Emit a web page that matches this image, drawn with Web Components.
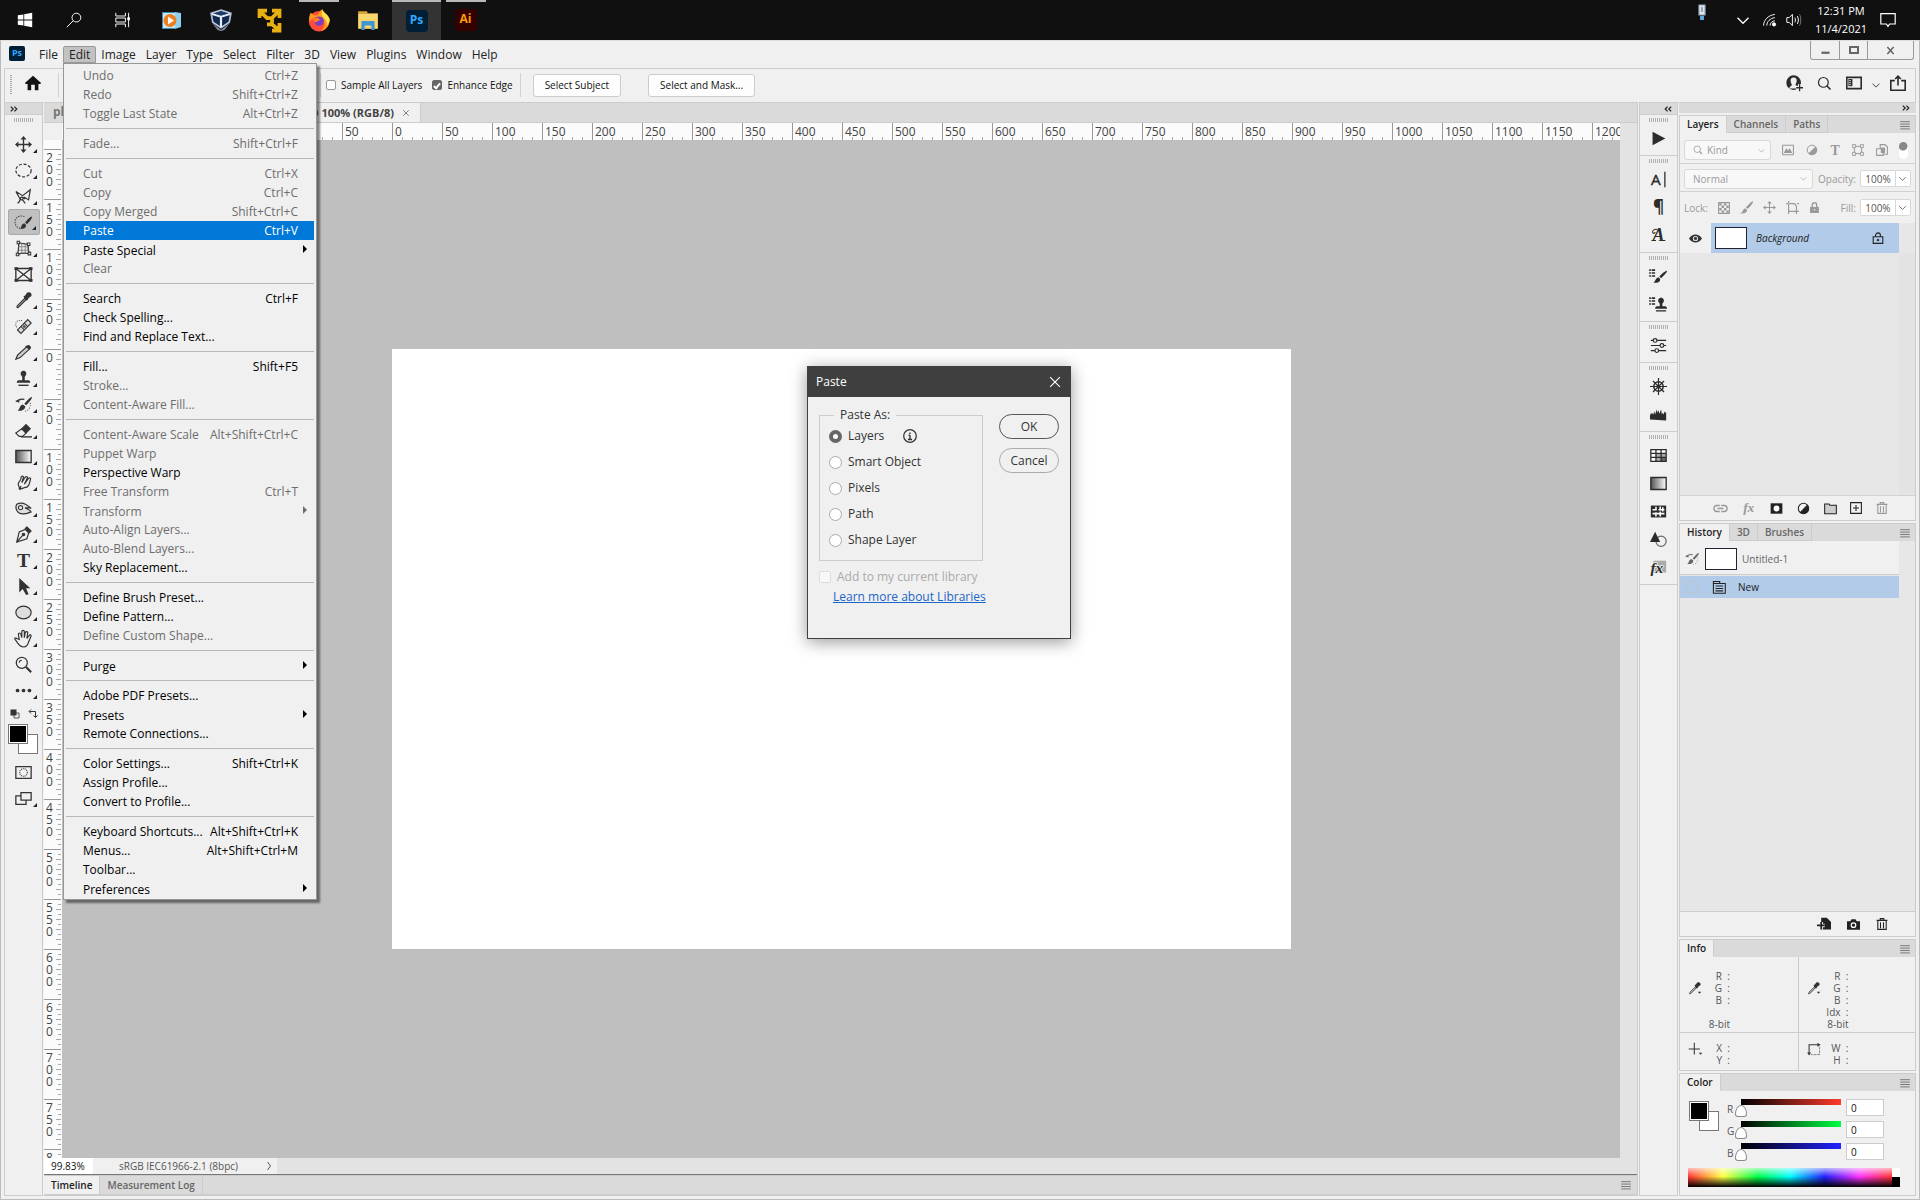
<!DOCTYPE html>
<html lang="en">
<head>
<meta charset="utf-8">
<title>Photoshop</title>
<style>
  html, body { height: 100%; }
  body {
    margin: 0;
    display: flex;
    flex-direction: column;
    overflow: hidden;
    background: #f0f0f0;
    color: #333;
    font: 12px/16px "Open Sans", "Noto Sans", sans-serif;
  }
</style>
</head>
<body>
<task-bar></task-bar>
<app-window></app-window>

<script>
// inner markup of every icon, on a 20x20 grid
const ICONS = {
  windows: '<path fill="currentColor" stroke="none" d="M1 4l7-1v6.500H1zM9 2.800L19 1v8.500H9zM1 10.500h7V17l-7-1zM9 10.500h10V19L9 17.200z"/>',
  search: '<circle cx="13" cy="7" r="5.500"/><path d="M9 11L1 19"/>',
  lens: '<circle cx="8.500" cy="8.500" r="6.500" stroke-width="1.600"/><path stroke-width="2.200" d="M13 13l5 5"/>',
  taskview: '<path d="M1 1v4h12V1M1 19v-4h12v4M1 7.500h12v5H1zM17 1v18"/><path fill="currentColor" d="M16 7h2v3h-2z"/>',
  player: '<path fill="#3d8ab5" stroke="none" d="M0 2h13v17H0z"/><path fill="#8fd0ee" stroke="none" d="M13 2l6 1v14l-6 2z"/><path fill="#c6e7f5" stroke="none" d="M1 3h12v15H1z"/><circle cx="8" cy="10.500" r="6.500" fill="#ef7d1a" stroke="none"/><path fill="#fff" stroke="none" d="M6 6.500l6 4-6 4z"/>',
  vbox: '<path fill="#8592b0" stroke="none" d="M2 13l8 6 8-6-5 6-3 1-3-1z"/><path fill="#12294f" stroke="#b7c4dc" stroke-width="1.500" d="M10 1l9 3-1.500 8L10 17l-7.500-5L1 4z"/><path fill="#274778" stroke="#e6edf8" stroke-width="2" d="M2 4.500L10 7l8-2.500M10 7v9.500"/><path fill="#203c6b" stroke="none" d="M10 2l7 2-7 2-7-2z"/>',
  vmware: '<path stroke="#e8b010" stroke-width="3" d="M2 8V2h6M2 2l6 6h3M12 2h6v6M18 2l-6 6v5M12 18h6v-6M18 18l-6-5H8"/>',
  firefox: '<circle cx="10" cy="11" r="8.500" fill="#ff4b39" stroke="none"/><path fill="#ff9a1f" stroke="none" d="M3 4l3 2 3 0c0-2 2-4 4-5 0 3 5 4 6 9 0 4-3 8-7 9 4-4 3-9 0-11L6 8l-4 3c-.500-3 0-5 1-7z"/><path fill="#ffe14d" stroke="none" d="M13 1c0 3 5 4 6 9l-2 5c0-5-4-7-5-10z"/><circle cx="10" cy="11" r="4" fill="#7b3fc4" stroke="none"/><path fill="#ff7b25" stroke="none" d="M4 9l5-1 2 2-4 2z"/>',
  explorer: '<path fill="#e0a32e" stroke="none" d="M1 2h8l1 2H1z"/><path fill="#fbd56d" stroke="none" d="M1 4h18v14H1z"/><path fill="#3f96d2" stroke="none" d="M4 19v-8h12v8h-3v-4H7v4z"/>',
  usb: '<path fill="#dfe8f0" stroke="#9ab" d="M7 2h6v10H7z"/><path fill="#5ca7dc" stroke="none" d="M8 13h4v4H8z"/><path stroke="#678" d="M10 4v5"/>',
  down: '<path d="M5 8l5 5 5-5"/>',
  right: '<path stroke-width="2" d="M7 2l6 8-6 8"/>',
  wifi: '<path d="M2 17C2 10 8 4 16 3M6 17c0-5 4-9 10-10M10 17c0-3 3-6 6-6"/><circle cx="15" cy="15.500" r="2" fill="currentColor"/>',
  volume: '<path d="M1 7h3l4-4v14l-4-4H1zM11 7c1 2 1 4 0 6M14 5c2 3 2 7 0 10"/><path stroke="#777" d="M17 3c2 4 2 10 0 14"/>',
  notice: '<path stroke-width="1.500" d="M1 2h18v13h-7l-2 3-2-3H1z"/>',
  home: '<path fill="currentColor" stroke="none" d="M10 2l9 8-1 1h-2v7h-4v-6H8v6H4v-7H2l-1-1z"/>',
  user: '<circle cx="9" cy="9" r="8" fill="currentColor"/><path fill="#f0f0f0" stroke="none" d="M9 3c3 0 4 2 3.500 5L11 12c4 1 4 3 4 4H4c0-2 1-3 3-4L5.500 8C5 5 6 3 9 3z"/><path stroke="#f0f0f0" stroke-width="4" d="M16 11v8M12 15h7"/><path stroke-width="1.500" d="M16 11v8M12 15h8"/>',
  workspace: '<path stroke-width="2" d="M1 3h18v14H1z"/><path stroke="none" fill="currentColor" d="M3 5h5v9H3z"/><path stroke="#f0f0f0" d="M4 7h2M4 9.500h2M4 12h2"/>',
  share: '<path stroke-width="2" d="M6 7H1v12h18V7h-5M10 13V2M6.500 5L10 1.500 13.500 5"/>',
  move: '<path d="M10 2v16M2 10h16" stroke-width="1.600"/><path fill="currentColor" stroke="none" d="M10 0l3.500 4h-7zM10 20l3.500-4h-7zM0 10l4-3.500v7zM20 10l-4-3.500v7z"/>',
  marquee: '<ellipse cx="10" cy="10" rx="9" ry="7.500" stroke-width="1.400" stroke-dasharray="3.500 2"/>',
  lasso: '<path stroke-width="1.400" d="M1 4l8 5 9-7-2 12-5-3-3 3c-3 0-2-4 1-3l3 2M1 4l5 9c0 3-1 4-3 5M9 14l3 4"/>',
  quick: '<path stroke-dasharray="1.500 1.500" d="M11 3C7 1 0 3 0 9c0 5 3 8 8 8"/><path fill="currentColor" stroke="none" d="M20 3c1 1-3 7-6 9l-2-2c2-3 6-7 8-7zM11 11l2 2c0 4-3 5-7 4 2-1 1-5 5-6z"/>',
  warp: '<path stroke-width="1.500" d="M4 3c4 2 8 1 12 2M4 3c1 5 0 9-1 14M3 17c5-2 9-2 14-1M16 5c-1 4-1 7 1 11"/><path stroke="#888" d="M8 4v12M12 5v10M4 8h12M4 12h12"/><path fill="#f0f0f0" d="M2.500 1.500h3v3h-3zM14.500 3.500h3v3h-3zM1.500 15.500h3v3h-3zM15.500 14.500h3v3h-3z"/>',
  frame: '<path stroke-width="1.600" d="M1 3h18v14H1zM1 3l18 14M19 3L1 17"/><path fill="currentColor" d="M0 2h3v2H0zM17 2h3v2h-3zM0 16h3v2H0zM17 16h3v2h-3z"/>',
  dropper: '<path d="M12 7l-9 9c-1 1-1 3 1 2l9-9z" fill="#f0f0f0" stroke-width="1.500"/><path fill="currentColor" stroke="none" d="M10 5l2-1 2-3c3-2 7 1 5 4l-3 2-1 2-1 1-2-1z"/>',
  heal: '<path stroke-dasharray="1 1.500" d="M2 11C-1 6 2 2 8 3"/><path fill="#ddd" stroke-width="1.400" d="M15 2l4 4L7 18l-4-4z"/><path d="M11 6l4 4M7 10l4 4"/><circle cx="11" cy="10" r="1"/>',
  pencil: '<path fill="#ccc" stroke-width="1.400" d="M14 3l3 3L6 16l-5 2 2-5z"/><path fill="currentColor" d="M13 3l2-1c1-1 4 1 3 3l-1 1z"/>',
  stamp: '<path fill="currentColor" stroke="none" d="M10 1c3 0 4 3 3 5l-1.500 2v4H16c1 0 2 1 2 3H2c0-2 1-3 2-3h4.500V8L7 6c-1-2 0-5 3-5z"/><path stroke-width="1.600" d="M4 18h12"/>',
  histbrush: '<path stroke-width="1.500" d="M2 7c2-3 5-4 9-3"/><path fill="currentColor" stroke="none" d="M0 6l5-2v4zM20 1c0 3-4 7-7 10l-2-2c3-3 6-7 9-8zM9 10l3 2c0 4-4 6-9 5 3-1 2-6 6-7z"/><path stroke-dasharray="1 2" d="M18 8c1 5-2 9-6 10"/>',
  eraser: '<path fill="#f0f0f0" stroke-width="1.400" d="M8 8l5 5-4 4H5l-4-4z"/><path fill="currentColor" d="M13 3l5 5-5 5-5-5z"/><path stroke-width="1.600" d="M7 17.500h13"/>',
  gradient: '<defs><linearGradient id="g"><stop offset="0" stop-color="#555"/><stop offset="1" stop-color="#fff"/></linearGradient></defs><path fill="url(#g)" stroke-width="1.600" d="M1 3h18v14H1z"/>',
  smudge: '<path stroke-width="1.400" d="M5 18c1-3-2-4-1-7 1-4 4-3 3-7 1-2 3-2 3 0L8 10c2-2 2-5 5-7 2 0 2 1 1 3l-3 6 5-7c2-1 3 0 2 2-1 5-2 9-7 9l-5 2 1-4"/>',
  sponge: '<path fill="#e0e0e0" stroke-width="1.400" d="M2 5c5-3 10-2 17 5-3-2-4 0-7-1 3 2 6 3 7 5-6 3-14 4-17-2-1-2-1-5 0-7z"/><circle cx="6.500" cy="9" r="2.500"/>',
  pen: '<path stroke-width="1.400" d="M12 4l4 4-2 7-12 4 3-12zM2 19l7-8"/><circle cx="10" cy="10" r="1.500" fill="currentColor"/><path fill="currentColor" d="M14 1l5 5-2 2-5-5z"/>',
  type: '<text x="10" y="18" font-family="Liberation Serif" font-weight="bold" font-size="23" text-anchor="middle" fill="currentColor" stroke="none">T</text>',
  arrow: '<path fill="currentColor" stroke="none" d="M5 0v17l4-4 4 7 3-1-3-7h5z"/>',
  ellipse: '<ellipse cx="10" cy="10" rx="9" ry="7.500" fill="#ddd" stroke-width="1.400"/>',
  hand: '<path fill="#f0f0f0" stroke-width="1.400" d="M5 11L4 5c0-2 2-2 3 0l1 4V2c0-2 3-2 3 0v7l1-6c1-2 3-1 3 0l-1 7 3-4c1-1 2 0 2 1l-3 7c-1 4-3 6-6 6-5 0-6-4-10-9-1-2 1-2 2-1z"/>',
  zoom: '<circle cx="8" cy="8" r="6.500" stroke-width="1.500"/><path d="M5 8c0-2 1-3 3-3"/><path stroke-width="2.500" d="M13 13l6 6"/>',
  dots: '<g fill="currentColor" stroke="none"><circle cx="3" cy="10" r="2.200"/><circle cx="10" cy="10" r="2.200"/><circle cx="17" cy="10" r="2.200"/></g>',
  mask: '<path stroke-width="1.500" d="M1 3h18v14H1z"/><circle cx="10" cy="10" r="4.500" stroke-dasharray="1.200 1"/>',
  screens: '<path stroke-width="1.500" d="M7 3h12v9H7zM7 7H1v10h12v-5"/>',
  tiny: '<path stroke-width="1.600" d="M8 8h10v10H8z"/><path fill="currentColor" stroke="none" d="M1 1h12v12H1z"/>',
  swap: '<path stroke-width="2" d="M3 5h12v12M6 1L2 5l4 4M11 13l4 4 4-4"/>',
  play: '<path fill="currentColor" stroke="none" d="M3 2l15 8-15 8z"/>',
  char: '<text x="7" y="16" font-size="18" text-anchor="middle" fill="currentColor" stroke="currentColor" stroke-width=".5">A</text><path stroke-width="1.500" d="M17.500 1v18"/>',
  para: '<text x="10" y="16" font-size="20" font-weight="bold" text-anchor="middle" fill="currentColor" stroke="none">¶</text>',
  glyph: '<text x="10" y="17" font-family="Liberation Serif" font-style="italic" font-weight="bold" font-size="21" text-anchor="middle" fill="currentColor" stroke="none">A</text><path d="M9 3c-4-1-6 1-6 3s3 2 3 0M2 16h5M12 16h6"/>',
  brushes: '<path stroke-width="1.800" stroke-dasharray="2 1 4 9" d="M-1 2.500h7M-1 6h7M-1 9.500h7"/><path fill="currentColor" stroke="none" d="M20 3c0 3-4 6-7 9l-2-2c3-3 6-6 9-7zM10 11l2 2c0 4-3 5-8 4 3-1 2-5 6-6z"/>',
  clones: '<path stroke-width="1.800" stroke-dasharray="2 1 4 9" d="M-1 2.500h7M-1 6h7M-1 9.500h7"/><path fill="currentColor" stroke="none" d="M13 2c3 0 4 3 3 5l-1.500 2v3H18c1 0 2 1 2 3H6c0-2 1-3 2-3h3.500V9L10 7c-1-2 0-5 3-5z"/><path stroke-width="1.500" d="M7 17.500h12"/>',
  sliders: '<path stroke-width="1.400" d="M1 4h18M1 10h18M1 16h18"/><g fill="#f0f0f0" stroke-width="1.400"><circle cx="6" cy="4" r="2.200"/><circle cx="14" cy="10" r="2.200"/><circle cx="8" cy="16" r="2.200"/></g>',
  wheel: '<circle cx="10" cy="10" r="5.500" stroke-width="1.800"/><path stroke-width="1.400" d="M10 0v20M0 10h20M3.500 3.500l13 13M16.500 3.500l-13 13"/>',
  histogram: '<path fill="currentColor" stroke="none" d="M0 16V8l1 3 1-3 2 2 1-4 1 4 2-6 1 4 1-3 1 4 2-5 1 6 1-2 1 2 1-4v1l1 1 1-1v10z"/>',
  swatches: '<path fill="#fff" stroke="none" d="M1 3h18v14H1z"/><path fill="#aaa" stroke="none" d="M7 8h12v9H7z"/><path fill="#666" stroke="none" d="M13 12h6v5h-6z"/><path stroke-width="1.500" d="M1 3h18v14H1zM7 3v14M13 3v14M1 7.600h18M1 12.300h18"/>',
  pattern: '<path fill="currentColor" stroke="none" d="M1 3h18v14H1z"/><path stroke="#fff" stroke-width="1.800" d="M7 4.500v4M7 11v5M12 4v4M12 10v6M3 8h5M10 8h7M3 12.500h3M8 12.500h9M15 5v5"/>',
  shapes: '<circle cx="13" cy="12" r="6" stroke="#666" stroke-width="1.400"/><path fill="currentColor" stroke="none" d="M6 1l6 12H0z"/>',
  styles: '<path fill="#aaa" stroke="none" d="M4 2h15v14H4z"/><text x="8" y="17" font-family="Liberation Serif" font-style="italic" font-weight="bold" font-size="18" text-anchor="middle" fill="currentColor" stroke="#f0f0f0" stroke-width="2" paint-order="stroke">fx</text>',
  burger: '<path stroke-width="1.400" d="M2 4.500h16M2 8.500h16M2 12.500h16M2 16.500h16"/>',
  image: '<path stroke-width="1.800" d="M1 2h18v16H1z"/><path fill="currentColor" stroke="none" d="M3 15l4-8 3 4 3-4 4 8z"/>',
  adjust: '<circle cx="10" cy="10" r="8" stroke-width="1.600"/><path fill="currentColor" stroke="none" d="M16 4a8.500 8.500 0 0 1-12 12z"/>',
  crop: '<path stroke-width="1.600" d="M4 4h12v12H4z"/><path fill="#f0f0f0" stroke-width="1.500" d="M1 1h5v5H1zM14 1h5v5h-5zM1 14h5v5H1zM14 14h5v5h-5z"/>',
  smart: '<path stroke-width="1.800" d="M7 8V1h8l4 4v12h-6M1 8h11v11H1z"/><path fill="currentColor" stroke="none" d="M8 6h7v9H8z"/>',
  checker: '<path stroke-width="1.800" d="M1 1h18v18H1z"/><path fill="currentColor" stroke="none" d="M2 2h4v4H2zM10 2h4v4h-4zM6 6h4v4H6zM14 6h4v4h-4zM2 10h4v4H2zM10 10h4v4h-4zM6 14h4v4H6zM14 14h4v4h-4z"/>',
  brush: '<path fill="currentColor" stroke="none" d="M20 0c1 3-5 9-8 12l-3-2c3-3 8-9 11-10zM8 11l3 3c0 4-5 6-11 5 5-1 4-7 8-8z"/>',
  artboard: '<path stroke-width="1.800" d="M4 0v3M0 4h3M5 4h8l3 4v8H4V4M4 17v3M16 17v3M17 16h3M17 4h3"/>',
  lock: '<path fill="currentColor" stroke="none" d="M2 9h16v11H2z"/><path stroke-width="2.500" d="M6 9V5c0-5 8-5 8 0v4"/><circle cx="10" cy="14" r="1.500" fill="#f0f0f0" stroke="none"/>',
  padlock: '<path stroke-width="1.800" d="M2 8h16v11H2zM6 8V6c0-6 8-6 8 0v2"/><circle cx="10" cy="13.500" r="1.500" fill="currentColor"/>',
  eye: '<path fill="currentColor" stroke="none" d="M0 10c5-8 15-8 20 0-5 8-15 8-20 0z"/><circle cx="10" cy="10" r="4" fill="#f0f0f0" stroke="none"/><circle cx="10" cy="10" r="2" fill="currentColor"/>',
  link: '<path stroke-width="1.800" d="M9 6H5C0 6 0 14 5 14h4M11 6h4c5 0 5 8 0 8h-4M6 10h8"/>',
  fx: '<text x="9" y="15" font-family="Liberation Serif" font-style="italic" font-weight="bold" font-size="18" text-anchor="middle" fill="currentColor" stroke="none">fx</text>',
  addmask: '<path fill="currentColor" stroke="none" d="M1 2h18v16H1z"/><circle cx="10" cy="10" r="4.500" fill="#fff" stroke="none"/>',
  folder: '<path fill="#ccc" stroke-width="1.600" d="M1 3h7l1 2h10v13H1z"/>',
  plus: '<path stroke-width="1.800" d="M1 1h18v18H1zM10 5v10M5 10h10"/>',
  trash: '<path stroke-width="1.800" d="M1 4h18M7 4V1h6v3M3 4v15h14V4M7.500 7v10M12.500 7v10"/>',
  document: '<path stroke-width="1.500" d="M2 5h17v14H2zM2 5V2h9v3M5 8.500h11M5 12h11M5 15.500h11"/>',
  snapdoc: '<path fill="currentColor" stroke="none" d="M6 1h8l6 6v11H8v-4H6z"/><path stroke="#f0f0f0" stroke-width="5" d="M0 12h11M6 7v10"/><path stroke-width="2.500" d="M0 12h11M6 7v11"/>',
  camera: '<path fill="currentColor" stroke="none" d="M0 5h5l2-3h6l2 3h5v13H0z"/><circle cx="10" cy="11" r="3.500" stroke="#fff" stroke-width="1.800"/>',
  cross: '<path stroke-width="1.500" d="M9 1v17M1 10h16"/>',
  bounds: '<path stroke-width="1.500" d="M3 18V4h15M1 15l2 3 2-3M15 2l3 2-3 2"/><path stroke-dasharray="1 1" d="M18 7v11H5"/>',
  close: '<path stroke-width="1.600" d="M3 3l14 14M17 3L3 17"/>',
  winclose: '<path stroke-width="3.500" d="M3 2l14 16M17 2L3 18"/>',
  winmin: '<path stroke-width="5" d="M1 15h18"/>',
  winmax: '<path stroke-width="4" d="M2 4h16v12H2z"/>',
  info: '<circle cx="10" cy="10" r="9" stroke-width="1.800"/><path stroke-width="2" d="M10 9v6M8 9h2M7 15h6M9 6h2"/>',
  caret: '<path fill="currentColor" stroke="none" d="M3 7h14l-7 8z"/>',
  chevrons: '<path stroke-width="3" d="M2 4l6 6-6 6M11 4l6 6-6 6"/>',
  chevronsLeft: '<path stroke-width="3" d="M9 4l-6 6 6 6M18 4l-6 6 6 6"/>'
};

class PsIcon extends HTMLElement {
  constructor() {
    super();
    this.attachShadow({ mode: "open" });
  }

  connectedCallback() {
    const size = this.getAttribute("size") || 16;
    this.shadowRoot.innerHTML = `
      <style>
        :host { display: inline-flex; flex: none; }
        svg { display: block; fill: none; stroke: currentColor; stroke-width: 1.2; overflow: visible; }
      </style>
      <svg width="${size}" height="${size}" viewBox="0 0 20 20" aria-hidden="true">${ICONS[this.getAttribute("name")]}</svg>`;
  }
}
customElements.define("ps-icon", PsIcon);

// rules that every component shares
const BASE = `
  *, *::before, *::after { box-sizing: border-box; }
  :host([hidden]) { display: none; }
  button { font: inherit; color: inherit; background: none; border: 0; padding: 0; margin: 0; }
  input, select { font: inherit; color: inherit; margin: 0; }
  ul { list-style: none; margin: 0; padding: 0; }
`;

function component(name, markup) {
  const template = document.createElement("template");
  template.innerHTML = `<style>${BASE}</style>${markup}`;
  customElements.define(name, class extends HTMLElement {
    constructor() {
      super();
      this.attachShadow({ mode: "open" });
      this.shadowRoot.appendChild(template.content.cloneNode(true));
    }
  });
}

const icon = (name, size = 16) => `<ps-icon name="${name}" size="${size}"></ps-icon>`;
const iconButton = (name, label, size) => `<button aria-label="${label}">${icon(name, size)}</button>`;

component("task-bar", `
  <style>
    :host { display: flex; flex: none; height: 40px; background: #101010; color: #fff; }
    nav { display: flex; }
    nav button { width: 49px; display: grid; place-items: center; }
    .open { background: linear-gradient(#b8b8b8, #b8b8b8) center top / 40px 2px no-repeat; }
    .active { background: #333; border-top: 2px solid #b8b8b8; }
    b { width: 22px; height: 22px; border-radius: 4px; font-size: 12px; line-height: 20px; background: #001e36; color: #31a8ff; }
    b.ai { background: #330000; color: #ff9a00; }
    .tray { margin-left: auto; display: flex; align-items: center; gap: 8px; padding-right: 24px; }
    .usb { margin: 0 12px 10px 0; }
    time { width: 62px; text-align: center; font-size: 11px; line-height: 18px; }
  </style>
  <nav>
    ${iconButton("windows", "Start", 16)}
    ${iconButton("search", "Search", 16)}
    ${iconButton("taskview", "Task View", 16)}
    ${iconButton("player", "Media Player", 20)}
    ${iconButton("vbox", "VirtualBox", 22)}
    ${iconButton("vmware", "VMware", 25)}
    <button class="open" aria-label="Firefox">${icon("firefox", 24)}</button>
    ${iconButton("explorer", "File Explorer", 22)}
    <button class="active"><b>Ps</b></button>
    <button class="open"><b class="ai">Ai</b></button>
  </nav>
  <div class="tray">
    <span class="usb">${icon("usb", 20)}</span>
    ${icon("down", 22)}${icon("wifi", 16)}${icon("volume", 16)}
    <time>12:31 PM<br>11/4/2021</time>
    ${icon("notice", 16)}
  </div>
`);

component("menu-bar", `
  <style>
    :host { display: flex; flex: none; height: 27px; padding: 0 2px 0 4px; color: #222; }
    .logo { width: 16px; height: 15px; margin: 5px 9px 0 1px; border-radius: 2px; background: #001e36; color: #31a8ff; font-size: 9px; line-height: 14px; text-align: center; }
    nav { display: flex; align-items: flex-start; padding-top: 5px; }
    nav button { height: 17px; padding: 0 4px; line-height: 16px; border: 1px solid transparent; }
    nav .on { padding: 0 5px; background: #c2c2c2; border-color: #999; border-radius: 2px 2px 0 0; }
    .window { margin-left: auto; display: flex; height: 19px; border: 1px solid #999; border-top: 0; border-radius: 0 0 3px 3px; color: #666; }
    .window button { width: 28px; display: grid; place-items: center; }
    .window button + button { border-left: 1px solid #999; }
    .window button:last-child { width: 46px; }
  </style>
  <b class="logo">Ps</b>
  <nav>
    <button>File</button><button class="on">Edit</button><button>Image</button><button>Layer</button><button>Type</button><button>Select</button><button>Filter</button><button>3D</button><button>View</button><button>Plugins</button><button>Window</button><button>Help</button>
  </nav>
  <div class="window">
    ${iconButton("winmin", "Minimize", 9)}${iconButton("winmax", "Maximize", 10)}${iconButton("winclose", "Close", 9)}
  </div>
`);

component("options-bar", `
  <style>
    :host { display: flex; flex: none; align-items: center; height: 34px; padding: 0 9px 1px 5px; border: 1px solid #ccc; border-width: 1px 1px 0; font-size: 10px; color: #111; }
    .grip { width: 2px; height: 20px; background: repeating-linear-gradient(#aaa 0 1px, #f0f0f0 1px 2px); margin-right: 12px; }
    .rule { width: 1px; height: 24px; background: #d2d2d2; }
    .spacer { width: 16px; }
    .tools { width: 261px; }
    label { display: flex; align-items: center; gap: 5px; margin-left: 5px; }
    label + label { margin-left: 10px; }
    label + .rule { margin: 0 12px 0 7px; }
    input { appearance: none; width: 10px; height: 10px; border: 1px solid #999; border-radius: 2px; background: #fff; }
    input:checked { background: #666; border-color: #666; display: grid; place-items: center; }
    input:checked::after { content: ""; width: 4px; height: 7px; border: solid #fff; border-width: 0 2px 2px 0; rotate: 40deg; }
    .push { height: 23px; padding: 0 11px; margin-right: 27px; background: #fdfdfd; border: 1px solid #ccc; border-radius: 3px; }
    .right { margin-left: auto; display: flex; align-items: center; gap: 14px; color: #2b2b2b; }
    .more { margin: 0 -7px; display: grid; }
  </style>
  <span class="grip"></span>
  ${iconButton("home", "Home", 18)}
  <span class="spacer"></span><span class="rule"></span>
  <span class="tools"></span><span class="rule"></span>
  <label><input type="checkbox">Sample All Layers</label>
  <label><input type="checkbox" checked>Enhance Edge</label>
  <span class="rule"></span>
  <button class="push">Select Subject</button>
  <button class="push">Select and Mask...</button>
  <div class="right">
    ${iconButton("user", "Share user", 17)}${iconButton("lens", "Search", 15)}${iconButton("workspace", "Workspace", 16)}<span class="more">${icon("down", 14)}</span>${iconButton("share", "Share", 16)}
  </div>
`);

// [label, shortcut, flags]: d = disabled, s = has a submenu, h = highlighted
const EDIT_MENU = [
  [["Undo", "Ctrl+Z", "d"], ["Redo", "Shift+Ctrl+Z", "d"], ["Toggle Last State", "Alt+Ctrl+Z", "d"]],
  [["Fade...", "Shift+Ctrl+F", "d"]],
  [["Cut", "Ctrl+X", "d"], ["Copy", "Ctrl+C", "d"], ["Copy Merged", "Shift+Ctrl+C", "d"], ["Paste", "Ctrl+V", "h"], ["Paste Special", "", "s"], ["Clear", "", "d"]],
  [["Search", "Ctrl+F", ""], ["Check Spelling...", "", ""], ["Find and Replace Text...", "", ""]],
  [["Fill...", "Shift+F5", ""], ["Stroke...", "", "d"], ["Content-Aware Fill...", "", "d"]],
  [["Content-Aware Scale", "Alt+Shift+Ctrl+C", "d"], ["Puppet Warp", "", "d"], ["Perspective Warp", "", ""], ["Free Transform", "Ctrl+T", "d"], ["Transform", "", "d s"], ["Auto-Align Layers...", "", "d"], ["Auto-Blend Layers...", "", "d"], ["Sky Replacement...", "", ""]],
  [["Define Brush Preset...", "", ""], ["Define Pattern...", "", ""], ["Define Custom Shape...", "", "d"]],
  [["Purge", "", "s"]],
  [["Adobe PDF Presets...", "", ""], ["Presets", "", "s"], ["Remote Connections...", "", ""]],
  [["Color Settings...", "Shift+Ctrl+K", ""], ["Assign Profile...", "", ""], ["Convert to Profile...", "", ""]],
  [["Keyboard Shortcuts...", "Alt+Shift+Ctrl+K", ""], ["Menus...", "Alt+Shift+Ctrl+M", ""], ["Toolbar...", "", ""], ["Preferences", "", "s"]]
];

component("edit-menu", `
  <style>
    :host { display: block; width: 254px; padding: 2px 2px 1px; background: #f0f0f0; border: 1px solid #979797; box-shadow: 3px 3px 2px #0007; color: #000; }
    ul + ul { border-top: 1px solid #b8b8b8; margin-top: 5px; padding-top: 5px; }
    li button { display: flex; justify-content: space-between; width: 100%; height: 19px; padding: 0 16px 0 17px; line-height: 19px; text-align: left; }
    .d { color: #6d6d6d; }
    .h { background: #0078d7; color: #fff; }
    .s { line-height: 21px; }
    .s::after { content: ""; border: 4px solid transparent; border-left-color: currentColor; border-right: 0; margin: 5px -9px 0 0; height: 8px; }
  </style>
  ${EDIT_MENU.map(group => `<ul>${group.map(([label, key, flags]) =>
    `<li><button class="${flags}"><span>${label}</span>${key && `<span>${key}</span>`}</button></li>`).join("")}</ul>`).join("")}
`);

const TOOLS = ["move", "marquee", "lasso", "quick", "warp", "frame", "dropper", "heal", "pencil", "stamp", "histbrush", "eraser", "gradient", "smudge", "sponge", "pen", "type", "arrow", "ellipse", "hand", "zoom", "dots"];

component("tool-box", `
  <style>
    :host { display: flex; flex-direction: column; align-items: center; width: 39px; flex: none; border: 1px solid #ccc; color: #333; }
    header { align-self: stretch; height: 12px; padding-left: 5px; background: #dadada; border-bottom: 1px solid #ccc; display: flex; align-items: center; color: #222; }
    .grip { width: 20px; height: 4px; margin: 3px 0 9px; background: repeating-linear-gradient(90deg, #b0b0b0 0 1px, #f0f0f0 1px 2px); }
    .tool { position: relative; width: 32px; height: 26px; display: grid; place-items: center; border-radius: 2px; }
    .tool::after { content: ""; position: absolute; right: 3px; bottom: 4px; border: 2px solid #222; border-color: transparent #222 #222 transparent; }
    .tool:nth-of-type(6)::after, .tool:nth-of-type(21)::after { display: none; }
    .tool.on { background: #c0c0c0; border: 1px solid #aaa; }
    .mini { display: flex; gap: 8px; margin: 6px 0 5px; }
    .colors { display: grid; grid-template: 10px 10px 10px / 10px 10px 10px; margin: 0 2px 5px 0; }
    .colors span { border: 1px solid #777; }
    .fg { grid-area: 1 / 1 / 3 / 3; background: #000; z-index: 1; box-shadow: inset 0 0 0 1px #fff; }
    .bg { grid-area: 2 / 2 / 4 / 4; background: #fff; }
    .plain::after { display: none; }
  </style>
  <header>${icon("chevrons", 8)}</header>
  <span class="grip"></span>
  ${TOOLS.map(name => `<button class="tool${name === "quick" ? " on" : ""}" aria-label="${name}">${icon(name, 17)}</button>`).join("")}
  <div class="mini">${icon("tiny", 10)}${icon("swap", 10)}</div>
  <div class="colors"><span class="fg"></span><span class="bg"></span></div>
  <button class="tool plain" aria-label="Quick mask">${icon("mask", 17)}</button>
  <button class="tool" aria-label="Screen mode">${icon("screens", 17)}</button>
`);

// one 50px cell per label; cells before the "label-from" value carry ticks only
class PsRuler extends HTMLElement {
  constructor() {
    super();
    this.attachShadow({ mode: "open" });
  }

  connectedCallback() {
    const start = Number(this.getAttribute("start"));
    const end = Number(this.getAttribute("end"));
    const from = Number(this.getAttribute("label-from"));
    const vertical = this.hasAttribute("vertical");
    let cells = "";
    for (let n = start; n <= end; n += 50) {
      const text = n < from ? "" : String(Math.abs(n));
      cells += `<span>${vertical ? [...text].join("<br>") : text}</span>`;
    }
    this.shadowRoot.innerHTML = `
      <style>
        :host { display: flex; overflow: hidden; background: #fbfbfb; color: #444; font-size: 12px; min-width: 0; min-height: 0; }
        span { flex: none; box-sizing: border-box; width: 50px; height: 18px; padding-left: 2px; line-height: 18px; border-left: 1px solid #999;
          background: repeating-linear-gradient(90deg, transparent 0 9px, #aaa 9px 10px) 0 14px / 100% 3px no-repeat; }
        i { flex: none; width: 30px; }
        :host([vertical]) { flex-direction: column; }
        :host([vertical]) span { width: 17px; height: 50px; padding: 2px 0 0 2px; line-height: 12px; border: 0; border-top: 1px solid #999;
          background: repeating-linear-gradient(transparent 0 9px, #aaa 9px 10px) 12px 0 / 5px 100% no-repeat, repeating-linear-gradient(transparent 0 4px, #aaa 4px 5px) 14px 0 / 3px 100% no-repeat; }
        :host([vertical]) i { height: 9px; }
      </style><i></i>${cells}`;
  }
}
customElements.define("ps-ruler", PsRuler);

component("document-area", `
  <style>
    :host { display: flex; flex-direction: column; flex: 1; min-width: 0; margin: 0 1px; border: 1px solid #ccc; border-left: 0; background: #dadada; }
    .tabs { display: flex; height: 20px; border-bottom: 1px solid #ccc; font-weight: bold; line-height: 18px; color: #444; }
    .tabs a { color: inherit; text-decoration: none; }
    .tabs a:first-child { width: 120px; padding-left: 9px; border-right: 1px solid #ccc; color: #777; }
    .tabs .current { width: 257px; display: flex; justify-content: flex-end; align-items: center; gap: 8px; padding-right: 10px; background: #f0f0f0; border-right: 1px solid #ccc; font-size: 11px; }
    .view { flex: 1; min-height: 0; display: grid; grid-template: 17px minmax(0, 1fr) / 18px minmax(0, 1fr) 17px; background: #e3e3e3; }
    .corner { background: #f0f0f0; }
    .pasteboard { grid-area: 2 / 2; background: #bfbfbf; display: grid; place-items: center; }
    .canvas { width: 899px; height: 600px; background: #fff; }
    .left { grid-area: 2 / 1; }
    .status { display: flex; height: 17px; font-size: 10px; line-height: 16px; background: #e3e3e3; border-bottom: 1px solid #777; }
    .status span:first-child { width: 49px; padding-left: 7px; background: #fff; color: #111; }
    .status .profile { width: 184px; padding: 0 3px 0 26px; display: flex; justify-content: space-between; align-items: center; background: #f0f0f0; color: #555; }
    .bottom { display: flex; align-items: center; height: 20px; padding-right: 5px; font-size: 10px; font-weight: 600; line-height: 17px; color: #666; border: solid #ccc; border-width: 1px 0; }
    .bottom button { padding: 0 7px; border-right: 1px solid #ccc; height: 18px; }
    .bottom button:first-child { background: #f0f0f0; color: #222; }
    .bottom ps-icon { margin-left: auto; color: #666; }
  </style>
  <div class="tabs"><a href="#">pl</a><a href="#" class="current"><span>@ 100% (RGB/8)</span>${icon("close", 8)}</a></div>
  <div class="view">
    <div class="corner"></div>
    <ps-ruler start="-300" end="1200" label-from="-50"></ps-ruler>
    <ps-ruler class="left" vertical start="-200" end="800" label-from="-200"></ps-ruler>
    <div class="pasteboard"><div class="canvas"></div></div>
  </div>
  <div class="status"><span>99.83%</span><span class="profile">sRGB IEC61966-2.1 (8bpc) ${icon("right", 10)}</span></div>
  <div class="bottom"><button>Timeline</button><button>Measurement Log</button>${icon("burger", 12)}</div>
`);

const DOCK = [["play"], ["char", "para", "glyph"], ["brushes", "clones"], ["sliders"], ["wheel", "histogram"], ["swatches", "gradient", "pattern", "shapes", "styles"]];

component("icon-dock", `
  <style>
    :host { display: block; flex: none; width: 39px; border: 1px solid #ccc; color: #2b2b2b; }
    header { height: 12px; background: #dadada; border-bottom: 1px solid #ccc; display: flex; align-items: center; justify-content: flex-end; padding-right: 5px; color: #222; }
    div { display: flex; flex-direction: column; align-items: center; padding-bottom: 3px; border-bottom: 1px solid #ccc; }
    div::before { content: ""; width: 20px; height: 4px; margin: 3px 0 2px; background: repeating-linear-gradient(90deg, #b0b0b0 0 1px, #f0f0f0 1px 2px); }
    button { width: 30px; height: 28px; display: grid; place-items: center; }
  </style>
  <header>${icon("chevronsLeft", 8)}</header>
  ${DOCK.map(group => `<div>${group.map(name => iconButton(name, name, 17)).join("")}</div>`).join("")}
`);

// a tabbed panel: tabs="A,B" draws the tab row, the body is slotted
class PsPanel extends HTMLElement {
  constructor() {
    super();
    this.attachShadow({ mode: "open" });
  }

  connectedCallback() {
    const tabs = this.getAttribute("tabs").split(",");
    this.shadowRoot.innerHTML = `
      <style>
        ${BASE}
        :host { display: flex; flex-direction: column; border: 1px solid #ccc; border-top: 0; background: #f0f0f0; }
        header { display: flex; align-items: center; height: 18px; flex: none; background: #dadada; border-top: 1px solid #ccc; padding-right: 4px; font-size: 10px; font-weight: 600; color: #666; }
        header button { height: 17px; padding: 0 7px; line-height: 14px; border: solid #ccc; border-width: 0 1px 1px 0; }
        header button:first-child { background: #f0f0f0; color: #222; border-bottom-color: #f0f0f0; }
        header ps-icon { margin-left: auto; color: #666; }
      </style>
      <header>${tabs.map(tab => `<button>${tab}</button>`).join("")}${icon("burger", 12)}</header>
      <slot></slot>`;
  }
}
customElements.define("ps-panel", PsPanel);

component("layers-panel", `
  <style>
    :host { display: flex; flex-direction: column; flex: 1; min-height: 0; font-size: 10px; color: #999; background: #e7e7e7; }
    .row { display: flex; align-items: center; justify-content: space-between; padding: 2px 4px 0; background: #f0f0f0; border-bottom: 1px solid #d2d2d2; height: 28px; flex: none; }
    .filter { height: 31px; padding-top: 4px; }
    .lock { height: 31px; padding-top: 0; border: 0; }
    .pick { display: flex; align-items: center; height: 20px; border: 1px solid #d8d8d8; border-radius: 3px; background: #f8f8f8; padding: 0 3px 0 8px; color: #999; }
    select { appearance: none; border: 0; background: none; flex: 1; min-width: 0; padding: 0; outline: 0; }
    .kind { width: 87px; gap: 4px; }
    .normal { width: 129px; }
    .row button { display: grid; }
    .row .switch { width: 9px; height: 17px; border-radius: 5px; background: radial-gradient(circle at 4px 4px, #888 4px, #fff 5px); margin-right: 3px; }
    label { display: flex; align-items: center; gap: 4px; }
    .num { display: flex; align-items: center; width: 51px; height: 17px; border: 1px solid #d8d8d8; border-radius: 2px; background: #fff; color: #555; }
    .num input { width: 35px; height: 15px; border: 0; border-right: 1px solid #d8d8d8; padding: 0; text-align: center; background: none; }
    .layer { display: flex; height: 30px; flex: none; color: #333; }
    .eye { width: 31px; display: grid; place-items: center; background: #f0f0f0; }
    .name { flex: 1; margin-right: 16px; display: flex; align-items: center; background: #b1cbe8; padding: 0 15px 0 4px; color: #222; font-style: italic; }
    .thumb { width: 32px; height: 22px; margin-right: 9px; border: 1px solid #223; background: #fff; }
    .name ps-icon { margin-left: auto; }
    .rest { flex: 1; background: linear-gradient(#e3e3e3, #e3e3e3) right / 16px 100% no-repeat; }
    footer { display: flex; align-items: center; justify-content: space-between; height: 25px; flex: none; padding: 0 27px 0 33px; background: #f0f0f0; border-top: 1px solid #d2d2d2; color: #222; }
    footer .off { color: #999; }
    footer button { display: grid; }
  </style>
  <div class="row filter">
    <span class="pick kind">${icon("lens", 10)}<select aria-label="Filter kind"><option>Kind</select>${icon("down", 11)}</span>
    ${iconButton("image", "Pixel layers", 12)}${iconButton("adjust", "Adjustment layers", 12)}${iconButton("type", "Type layers", 12)}${iconButton("crop", "Shape layers", 12)}${iconButton("smart", "Smart objects", 12)}
    <button class="switch" aria-label="Filter on"></button>
  </div>
  <div class="row">
    <span class="pick normal"><select aria-label="Blend mode"><option>Normal</select>${icon("down", 11)}</span>
    <label>Opacity: <span class="num"><input value="100%">${icon("down", 13)}</span></label>
  </div>
  <div class="row lock">
    <span>Lock:</span>
    ${iconButton("checker", "Lock transparency", 12)}${iconButton("brush", "Lock pixels", 13)}${iconButton("move", "Lock position", 13)}${iconButton("artboard", "Lock artboard", 13)}${iconButton("lock", "Lock all", 11)}<span></span>
    <label>Fill: <span class="num"><input value="100%">${icon("down", 13)}</span></label>
  </div>
  <div class="layer">
    <span class="eye">${icon("eye", 13)}</span>
    <span class="name"><span class="thumb"></span>Background${icon("padlock", 12)}</span>
  </div>
  <div class="rest"></div>
  <footer>
    <button class="off" aria-label="Link">${icon("link", 15)}</button>
    <button class="off" aria-label="Layer style">${icon("fx", 15)}</button>
    ${iconButton("addmask", "Add mask", 13)}${iconButton("adjust", "Adjustment", 13)}${iconButton("folder", "Group", 13)}${iconButton("plus", "New layer", 12)}
    <button class="off" aria-label="Delete">${icon("trash", 12)}</button>
  </footer>
`);

component("history-panel", `
  <style>
    :host { display: flex; flex-direction: column; flex: 1; min-height: 0; font-size: 10px; background: #e7e7e7; }
    .row { display: flex; align-items: center; margin-right: 16px; flex: none; }
    .snap { height: 34px; padding: 3px 0 0 5px; background: #f0f0f0; border-bottom: 1px solid #ccc; color: #666; }
    .thumb { width: 32px; height: 22px; margin: 0 5px 0 6px; border: 1px solid #223; background: #fff; }
    .state { height: 22px; margin-top: 1px; padding-left: 6px; background: #b1cbe8; color: #222; }
    .state input { appearance: none; width: 12px; height: 12px; border: 1px solid #bcc4d0; margin-right: 14px; }
    .state ps-icon { margin-right: 12px; }
    footer { display: flex; align-items: center; justify-content: flex-end; gap: 16px; height: 25px; flex: none; margin-top: auto; padding-right: 27px; background: #f0f0f0; border-top: 1px solid #ccc; color: #222; }
    footer button { display: grid; }
  </style>
  <div class="row snap">${icon("histbrush", 14)}<span class="thumb"></span>Untitled-1</div>
  <div class="row state"><input type="checkbox" aria-label="History source">${icon("document", 14)}New</div>
  <footer>${iconButton("snapdoc", "New document", 14)}${iconButton("camera", "Snapshot", 13)}${iconButton("trash", "Delete", 12)}</footer>
`);

component("info-panel", `
  <style>
    :host { display: grid; grid-template: 76px 37px / 1fr 1fr; flex: none; font-size: 10px; line-height: 12px; color: #555; }
    section { display: flex; gap: 1px; padding: 13px 0 0 8px; align-items: flex-start; }
    .right { border-left: 1px solid #ccc; }
    .top { border-bottom: 1px solid #ccc; }
    .bottom { padding-top: 9px; }
    .pick { display: flex; align-items: flex-end; padding-top: 12px; color: #333; width: 15px; }
    .pick ps-icon + ps-icon { margin-left: -4px; }
    .bottom .pick { padding-top: 0; }
    .values { display: grid; grid-template-columns: 18px 3px; column-gap: 5px; text-align: right; white-space: nowrap; }
    .depth { grid-column: 1 / 3; grid-row: 5; }
    .values i { grid-column: 1 / 3; height: 12px; }
  </style>
  <section class="top"><span class="pick">${icon("dropper", 13)}${icon("caret", 5)}</span><div class="values"><span>R</span><span>:</span><span>G</span><span>:</span><span>B</span><span>:</span><i></i><span class="depth">8-bit</span></div></section>
  <section class="top right"><span class="pick">${icon("dropper", 13)}${icon("caret", 5)}</span><div class="values"><span>R</span><span>:</span><span>G</span><span>:</span><span>B</span><span>:</span><span>Idx</span><span>:</span><span class="depth">8-bit</span></div></section>
  <section class="bottom"><span class="pick">${icon("cross", 14)}${icon("caret", 5)}</span><div class="values"><span>X</span><span>:</span><span>Y</span><span>:</span></div></section>
  <section class="bottom right"><span class="pick">${icon("bounds", 14)}</span><div class="values"><span>W</span><span>:</span><span>H</span><span>:</span></div></section>
`);

component("color-panel", `
  <style>
    :host { display: flex; flex-direction: column; flex: none; height: 104px; padding: 8px 15px 7px 8px; font-size: 10px; color: #555; }
    .mix { display: flex; }
    .swatches { display: grid; grid-template: 10px 10px 10px / 10px 10px 10px; margin: 2px 8px 0 1px; }
    .swatches span { border: 1px solid #777; }
    .fg { grid-area: 1 / 1 / 3 / 3; background: #000; z-index: 1; box-shadow: inset 0 0 0 1px #fff; }
    .bg { grid-area: 2 / 2 / 4 / 4; background: #fff; }
    .channel { display: grid; grid-template-columns: 8px 111px 38px; height: 22px; }
    .channel label { line-height: 20px; }
    input[type=range] { appearance: none; height: 18px; width: 111px; background: linear-gradient(90deg, #000, var(--end)) 6px 0 / 100px 6px no-repeat; }
    input[type=range]::-webkit-slider-runnable-track { height: 18px; }
    input[type=range]::-webkit-slider-thumb { appearance: none; width: 12px; height: 12px; margin-top: 6px; background: #fff; border: 1px solid #888; border-radius: 6px 6px 3px 3px / 9px 9px 3px 3px; }
    input[type=text] { width: 38px; height: 17px; padding: 0 4px; border: 1px solid #ccc; background: #fff; color: #111; }
    .spectrum { height: 19px; margin-top: 3px; display: flex; }
    .hues { flex: 1; background: linear-gradient(#fffa, transparent 45%, #000), linear-gradient(90deg, #f33, #ff4 17%, #0f4 34%, #0ff 50%, #22f 67%, #f3f 84%, #f33); }
    .ends { width: 8px; background: linear-gradient(#fff 50%, #000 50%); }
  </style>
  <div class="mix">
    <div class="swatches"><span class="fg"></span><span class="bg"></span></div>
    <div>
      ${[["R", "#ff3a2a"], ["G", "#0f4"], ["B", "#22f"]].map(([name, end]) => `
      <div class="channel"><label for="${name}">${name}</label><input type="range" min="0" max="255" value="0" style="--end:${end}" aria-label="${name} level"><input type="text" id="${name}" value="0"></div>`).join("")}
    </div>
  </div>
  <div class="spectrum"><div class="hues"></div><div class="ends"></div></div>
`);

component("panel-column", `
  <style>
    :host { display: flex; flex-direction: column; flex: none; width: 237px; margin-left: 1px; border-top: 1px solid #ccc; gap: 2px; }
    .fold { height: 10px; flex: none; background: #dadada; display: flex; align-items: center; justify-content: flex-end; padding-right: 6px; color: #222; }
    .layers { height: 406px; }
    .history { flex: 1; min-height: 0; }
  </style>
  <div class="fold">${icon("chevrons", 8)}</div>
  <ps-panel class="layers" tabs="Layers,Channels,Paths"><layers-panel></layers-panel></ps-panel>
  <ps-panel class="history" tabs="History,3D,Brushes"><history-panel></history-panel></ps-panel>
  <ps-panel tabs="Info"><info-panel></info-panel></ps-panel>
  <ps-panel tabs="Color"><color-panel></color-panel></ps-panel>
`);

component("paste-dialog", `
  <style>
    :host { display: block; width: 264px; height: 273px; background: #f0f0f0; border: 1px solid #404040; box-shadow: 0 3px 16px #0006; color: #333; }
    header { display: flex; justify-content: space-between; align-items: center; height: 30px; padding: 0 8px; background: #3f3f3f; color: #fff; }
    header button { display: grid; }
    main { display: grid; grid-template-columns: 164px 60px; gap: 16px; padding: 10px 11px 0; }
    fieldset { height: 154px; margin: 0; padding: 0 9px; border: 1px solid #ccc; }
    legend { margin-left: 5px; padding: 0 6px; line-height: 16px; }
    label { display: flex; align-items: center; gap: 6px; height: 26px; }
    label ps-icon { margin-left: 13px; }
    input { appearance: none; width: 13px; height: 13px; border: 1px solid #aaa; background: #fff; border-radius: 50%; }
    input:checked { border: 4px solid #666; }
    .buttons { display: flex; flex-direction: column; gap: 9px; padding-top: 7px; }
    .buttons button { height: 25px; border: 1px solid #aaa; border-radius: 13px; }
    .buttons button:first-child { border-color: #555; }
    .library { padding-left: 11px; height: 24px; margin-top: 4px; color: #aaa; }
    .library input { width: 12px; height: 12px; border-radius: 2px; border-color: #ddd; background: #f8f8f8; }
    a { margin-left: 25px; color: #1a66c9; text-decoration: underline; }
  </style>
  <header>Paste<button aria-label="Close">${icon("close", 14)}</button></header>
  <main>
    <fieldset>
      <legend>Paste As:</legend>
      <label><input type="radio" name="as" checked>Layers ${icon("info", 14)}</label>
      <label><input type="radio" name="as">Smart Object</label>
      <label><input type="radio" name="as">Pixels</label>
      <label><input type="radio" name="as">Path</label>
      <label><input type="radio" name="as">Shape Layer</label>
    </fieldset>
    <div class="buttons"><button>OK</button><button>Cancel</button></div>
  </main>
  <label class="library"><input type="checkbox" disabled>Add to my current library</label>
  <a href="#">Learn more about Libraries</a>
`);

component("app-window", `
  <style>
    :host { display: flex; flex-direction: column; flex: 1; min-height: 0; border: 1px solid #bbb; border-top-color: #ddd; padding: 0 3px 3px; background: #f0f0f0; }
    .workspace { flex: 1; min-height: 0; display: flex; }
    /* floating over the document */
    edit-menu { position: absolute; left: 63px; top: 63px; z-index: 2; }
    paste-dialog { position: absolute; left: 807px; top: 366px; z-index: 1; }
  </style>
  <menu-bar></menu-bar>
  <options-bar></options-bar>
  <div class="workspace">
    <tool-box></tool-box>
    <document-area></document-area>
    <icon-dock></icon-dock>
    <panel-column></panel-column>
  </div>
  <edit-menu></edit-menu>
  <paste-dialog></paste-dialog>
`);
</script>
</body>
</html>
